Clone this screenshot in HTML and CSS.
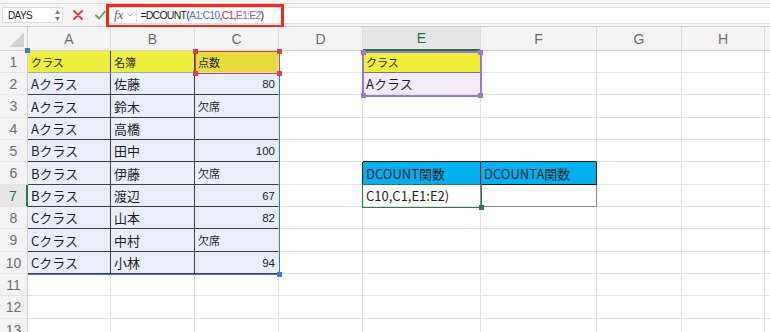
FILE: index.html
```html
<!DOCTYPE html>
<html lang="ja">
<head>
    <meta charset="UTF-8">
    <title>DCOUNT - Sheet</title>
    <link rel="stylesheet" href="styles.css">
</head>
<body>
    <div class="ribbon-edge"></div>

    <div class="formula-row">
        <div class="name-box">
            <span>DAYS</span>
            <svg class="spin" width="5" height="11" viewBox="0 0 5 11"><path d="M2.5 0 L5 4 L0 4 Z M0 7 L5 7 L2.5 11 Z" fill="#7a7a7a"/></svg>
        </div>
        <div class="formula-actions">
            <svg width="10" height="10" viewBox="0 0 10 10"><path d="M1 1 L9 9 M9 1 L1 9" stroke="#e0393e" stroke-width="1.8" stroke-linecap="round"/></svg>
            <svg width="11" height="10" viewBox="0 0 11 10"><path d="M1 5.5 L4 8.5 L10 1.5" fill="none" stroke="#4bae50" stroke-width="1.8" stroke-linecap="round" stroke-linejoin="round"/></svg>
        </div>
        <div class="formula-bar">
            <span class="fx">fx</span>
            <svg class="fx-caret" width="6" height="4" viewBox="0 0 6 4"><path d="M0.5 0.5 L3 3 L5.5 0.5" fill="none" stroke="#aaa" stroke-width="1"/></svg>
            <span class="formula-sep"></span>
            <span class="formula-text">=DCOUNT(<span class="ref-blue">A1:C10</span>,<span class="ref-red">C1</span>,<span class="ref-purple">E1:E2</span>)</span>
        </div>
        <!-- annotation box drawn over the formula -->
        <div class="callout"></div>
    </div>

    <div class="sheet-wrap">
        <div class="sheet">
            <!-- column headers -->
            <div class="cell corner"></div>
            <div class="cell col-head">A</div>
            <div class="cell col-head">B</div>
            <div class="cell col-head">C</div>
            <div class="cell col-head">D</div>
            <div class="cell col-head active">E</div>
            <div class="cell col-head">F</div>
            <div class="cell col-head">G</div>
            <div class="cell col-head">H</div>
            <div class="cell col-head"></div>

            <!-- row 1 -->
            <div class="cell row-head">1</div>
            <div class="cell head-yellow sep">クラス</div>
            <div class="cell head-yellow sep">名簿</div>
            <div class="cell head-score">点数</div>
            <div class="cell"></div>
            <div class="cell crit-head">クラス</div>
            <div class="cell"></div>
            <div class="cell"></div>
            <div class="cell"></div>
            <div class="cell"></div>

            <!-- row 2 -->
            <div class="cell row-head">2</div>
            <div class="cell data sep">Aクラス</div>
            <div class="cell data sep">佐藤</div>
            <div class="cell data num">80</div>
            <div class="cell"></div>
            <div class="cell crit-value">Aクラス</div>
            <div class="cell"></div>
            <div class="cell"></div>
            <div class="cell"></div>
            <div class="cell"></div>

            <!-- row 3 -->
            <div class="cell row-head">3</div>
            <div class="cell data sep">Aクラス</div>
            <div class="cell data sep">鈴木</div>
            <div class="cell data note">欠席</div>
            <div class="cell"></div>
            <div class="cell"></div>
            <div class="cell"></div>
            <div class="cell"></div>
            <div class="cell"></div>
            <div class="cell"></div>

            <!-- row 4 -->
            <div class="cell row-head">4</div>
            <div class="cell data sep">Aクラス</div>
            <div class="cell data sep">高橋</div>
            <div class="cell data"></div>
            <div class="cell"></div>
            <div class="cell"></div>
            <div class="cell"></div>
            <div class="cell"></div>
            <div class="cell"></div>
            <div class="cell"></div>

            <!-- row 5 -->
            <div class="cell row-head">5</div>
            <div class="cell data sep">Bクラス</div>
            <div class="cell data sep">田中</div>
            <div class="cell data num">100</div>
            <div class="cell"></div>
            <div class="cell above-result"></div>
            <div class="cell above-result"></div>
            <div class="cell"></div>
            <div class="cell"></div>
            <div class="cell"></div>

            <!-- row 6 -->
            <div class="cell row-head">6</div>
            <div class="cell data sep">Bクラス</div>
            <div class="cell data sep">伊藤</div>
            <div class="cell data note">欠席</div>
            <div class="cell before-result"></div>
            <div class="cell result-head">DCOUNT関数</div>
            <div class="cell result-head">DCOUNTA関数</div>
            <div class="cell"></div>
            <div class="cell"></div>
            <div class="cell"></div>

            <!-- row 7 -->
            <div class="cell row-head active">7</div>
            <div class="cell data sep">Bクラス</div>
            <div class="cell data sep">渡辺</div>
            <div class="cell data num">67</div>
            <div class="cell"></div>
            <div class="cell result-edit">C10,C1,E1:E2)</div>
            <div class="cell result-cell"></div>
            <div class="cell"></div>
            <div class="cell"></div>
            <div class="cell"></div>

            <!-- row 8 -->
            <div class="cell row-head">8</div>
            <div class="cell data sep">Cクラス</div>
            <div class="cell data sep">山本</div>
            <div class="cell data num">82</div>
            <div class="cell"></div>
            <div class="cell"></div>
            <div class="cell"></div>
            <div class="cell"></div>
            <div class="cell"></div>
            <div class="cell"></div>

            <!-- row 9 -->
            <div class="cell row-head">9</div>
            <div class="cell data sep">Cクラス</div>
            <div class="cell data sep">中村</div>
            <div class="cell data note">欠席</div>
            <div class="cell"></div>
            <div class="cell"></div>
            <div class="cell"></div>
            <div class="cell"></div>
            <div class="cell"></div>
            <div class="cell"></div>

            <!-- row 10 -->
            <div class="cell row-head">10</div>
            <div class="cell data sep">Cクラス</div>
            <div class="cell data sep">小林</div>
            <div class="cell data num">94</div>
            <div class="cell"></div>
            <div class="cell"></div>
            <div class="cell"></div>
            <div class="cell"></div>
            <div class="cell"></div>
            <div class="cell"></div>

            <!-- rows 11-13 -->
            <div class="cell row-head">11</div>
            <div class="cell"></div><div class="cell"></div><div class="cell"></div><div class="cell"></div>
            <div class="cell"></div><div class="cell"></div><div class="cell"></div><div class="cell"></div><div class="cell"></div>

            <div class="cell row-head">12</div>
            <div class="cell"></div><div class="cell"></div><div class="cell"></div><div class="cell"></div>
            <div class="cell"></div><div class="cell"></div><div class="cell"></div><div class="cell"></div><div class="cell"></div>

            <div class="cell row-head">13</div>
            <div class="cell"></div><div class="cell"></div><div class="cell"></div><div class="cell"></div>
            <div class="cell"></div><div class="cell"></div><div class="cell"></div><div class="cell"></div><div class="cell"></div>
        </div>

        <!-- formula reference highlights -->
        <div class="range range-blue"><i class="handle tl"></i><i class="handle br"></i></div>
        <div class="range range-red"><i class="handle tl"></i><i class="handle tr"></i><i class="handle bl"></i><i class="handle br"></i></div>
        <div class="range range-purple"><i class="handle tl"></i><i class="handle tr"></i><i class="handle bl"></i><i class="handle br"></i></div>
        <div class="range range-active"><i class="handle br"></i></div>
    </div>
</body>
</html>
```

FILE: styles.css
```css
:root {
    --grid-line: #e1e1e1;
    --head-bg: #f3f3f3;
    --head-text: #6e6e6e;
    --excel-green: #217346;
    --dark-line: #3f3f3f;
    --ref-blue: #3d79d9;
    --ref-red: #d6404a;
    --ref-purple: #9c78d0;
}

* {
    margin: 0;
    padding: 0;
    box-sizing: border-box;
}

body {
    width: 770px;
    height: 332px;
    overflow: hidden;
    background: #fff;
    color: #1f1f1f;
    font-family: "Noto Sans CJK JP", "Noto Sans", sans-serif;
}

/* ---------- top bar ---------- */

.ribbon-edge {
    height: 4px;
    background: #f4f4f4;
    border-bottom: 1px solid #dadada;
}

.formula-row {
    position: relative;
    display: flex;
    align-items: center;
    height: 23px;
    background: #f4f4f4;
    border-bottom: 1px solid #d2d2d2;
}

.name-box {
    display: flex;
    align-items: center;
    justify-content: space-between;
    width: 61px;
    height: 16px;
    margin-left: 2px;
    padding: 0 2px 0 5px;
    background: #fff;
    border: 1px solid #dadada;
    font: 10px "Liberation Sans", Arial, sans-serif;
    letter-spacing: -0.6px;
    color: #222;
}

.formula-actions {
    display: flex;
    align-items: center;
    gap: 12px;
    margin-left: 10px;
}

.formula-bar {
    flex: 1;
    display: flex;
    align-items: center;
    height: 17px;
    margin-left: 4px;
    background: #fff;
    border-top: 1px solid #dedede;
    border-bottom: 1px solid #dedede;
}

.fx {
    margin-left: 4px;
    font: italic 13px "Liberation Serif", serif;
    color: #555;
}

.fx-caret {
    margin-left: 4px;
}

.formula-sep {
    width: 1px;
    height: 13px;
    margin: 0 3px 0 3px;
    background: #e0e0e0;
}

.formula-text {
    font: 10.5px "Liberation Sans", Arial, sans-serif;
    letter-spacing: -0.75px;
    color: #222;
}

.ref-blue { color: #3f7bd8; }
.ref-red { color: #d4343e; }
.ref-purple { color: #8b5ec4; }

.callout {
    position: absolute;
    left: 106px;
    top: 0;
    width: 178px;
    height: 24px;
    border: 3px solid #f5281c;
}

/* ---------- grid ---------- */

.sheet-wrap {
    position: relative;
}

.sheet {
    display: grid;
    grid-template-columns: 28px 83px 84px 84px 84px 118px 116px 85px 83px 1fr;
    grid-template-rows: 24px 22px 22px 23px 22px 22px 23px 22px 22px 23px 22px 22px 23px 22px;
}

.cell {
    display: flex;
    align-items: center;
    padding: 0 3px;
    border-right: 1px solid var(--grid-line);
    border-bottom: 1px solid var(--grid-line);
    font-size: 13px;
    white-space: nowrap;
    overflow: hidden;
}

.col-head,
.row-head {
    justify-content: center;
    padding: 0;
    background: var(--head-bg);
    font: 14px "Liberation Sans", Arial, sans-serif;
    color: var(--head-text);
}

.col-head {
    border-bottom-color: #d0d0d0;
    border-right-color: #dcdcdc;
}

.row-head {
    border-right-color: #d0d0d0;
    border-bottom-color: #e4e4e4;
}

.col-head.active {
    background: #e6e6e6;
    color: var(--excel-green);
    border-bottom: 2px solid var(--excel-green);
}

.row-head.active {
    background: #e6e6e6;
    color: var(--excel-green);
    border-right: 2px solid var(--excel-green);
}

.corner {
    background: var(--head-bg) linear-gradient(135deg, transparent 50%, #d2d2d2 50%) no-repeat right 3px bottom 3px / 14px 14px;
    border-bottom-color: #d0d0d0;
    border-right-color: #d0d0d0;
}

/* source table A1:C10 */
.head-yellow {
    background: #eeef3c;
    font-size: 11px;
    border-bottom-color: #a8a8a8;
}

.head-score {
    background: #e7db3c;
    font-size: 11px;
}

.data {
    background: #eaeef9;
    border-bottom-color: var(--dark-line);
}

.sep {
    border-right-color: var(--dark-line);
}

.num {
    justify-content: flex-end;
    font: 11.5px "Liberation Sans", Arial, sans-serif;
}

.note {
    font-size: 11px;
}

/* criteria E1:E2 */
.crit-head {
    background: #f2ef3a;
    font-size: 11px;
    border-bottom-color: #777;
}

.crit-value {
    background: #f3ecf8;
}

/* result table E6:F7 */
.above-result {
    border-bottom-color: #1a1a1a;
}

.before-result {
    border-right-color: #1a1a1a;
}

.result-head {
    background: #00b0f0;
    border-right-color: #1a1a1a;
    border-bottom-color: #1a1a1a;
}

.result-edit {
    border-right-color: #888;
}

.result-cell {
    border-right-color: #8a8a8a;
    border-bottom-color: #8a8a8a;
}

/* ---------- reference highlights ---------- */

.range {
    position: absolute;
    pointer-events: none;
}

.range-blue {
    left: 28px;
    top: 24px;
    width: 252px;
    height: 224px;
    border-right: 1.5px solid var(--ref-blue);
    border-bottom: 1.5px solid var(--ref-blue);
    color: var(--ref-blue);
}

.range-red {
    left: 195px;
    top: 24px;
    width: 85px;
    height: 23px;
    border: 1px solid var(--ref-red);
    color: var(--ref-red);
}

.range-purple {
    left: 362px;
    top: 24px;
    width: 120px;
    height: 46px;
    border: 2px solid var(--ref-purple);
    color: var(--ref-purple);
}

.range-active {
    left: 362px;
    top: 157px;
    width: 120px;
    height: 24px;
    border: 1.5px solid #2c7a4b;
    color: #2c7a4b;
}

.handle {
    position: absolute;
    width: 5px;
    height: 5px;
    background: currentColor;
}

.handle.tl { left: -3px; top: -3px; }
.handle.tr { right: -3px; top: -3px; }
.handle.bl { left: -3px; bottom: -3px; }
.handle.br { right: -3px; bottom: -3px; }
```
